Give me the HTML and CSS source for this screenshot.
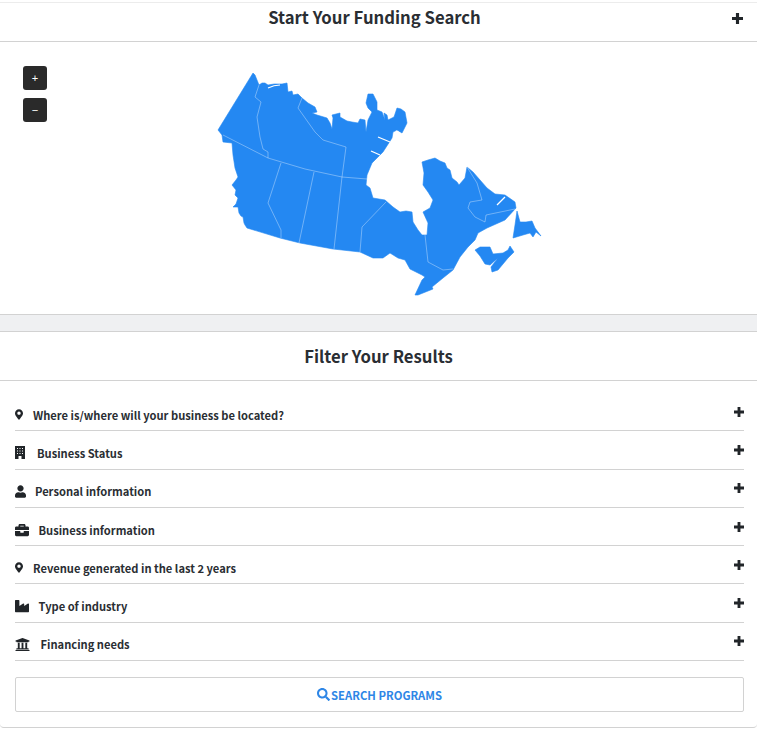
FILE: index.html
```html
<!DOCTYPE html>
<html lang="en">
<head>
<meta charset="utf-8">
<title>Funding Search</title>
<link rel="stylesheet" href="styles.css">
</head>
<body>
<svg class="defs" width="0" height="0" aria-hidden="true">
  <symbol id="i-plus" viewBox="0 0 448 448"><path d="M160 0h128v160h160v128H288v160H160V288H0V160h160z"/></symbol>
  <symbol id="i-marker" viewBox="0 0 384 512"><path d="M172.268 501.67C26.97 291.031 0 269.413 0 192 0 85.961 85.961 0 192 0s192 85.961 192 192c0 77.413-26.97 99.031-172.268 309.67-9.535 13.774-29.93 13.773-39.464 0zM192 272c44.183 0 80-35.817 80-80s-35.817-80-80-80-80 35.817-80 80 35.817 80 80 80z"/></symbol>
  <symbol id="i-building" viewBox="0 0 10 13"><path fill-rule="evenodd" d="M0 0h10v13H0zM2 2v1h1V2zm2.500 0v1h1V2zM7 2v1h1V2zM2 4.500v1h1v-1zm2.500 0v1h1v-1zM7 4.500v1h1v-1zM2 7v1h1V7zm2.500 0v1h1V7zM7 7v1h1V7zM3.500 10v3h3v-3z"/></symbol>
  <symbol id="i-user" viewBox="0 0 448 512"><path d="M224 256c70.700 0 128-57.300 128-128S294.700 0 224 0 96 57.300 96 128s57.300 128 128 128zm89.600 32h-16.700c-22.200 10.200-46.900 16-72.900 16s-50.600-5.800-72.900-16h-16.700C60.200 288 0 348.200 0 422.400V464c0 26.500 21.500 48 48 48h352c26.500 0 48-21.500 48-48v-41.600c0-74.200-60.200-134.400-134.400-134.400z"/></symbol>
  <symbol id="i-briefcase" viewBox="0 0 512 512"><path d="M320 336c0 8.840-7.160 16-16 16h-96c-8.840 0-16-7.160-16-16v-48H0v144c0 25.600 22.400 48 48 48h416c25.600 0 48-22.400 48-48V288H320v48zm144-208h-80V80c0-25.600-22.400-48-48-48H176c-25.600 0-48 22.400-48 48v48H48c-25.600 0-48 22.400-48 48v80h512v-80c0-25.600-22.400-48-48-48zm-144 0H192V96h128v32z"/></symbol>
  <symbol id="i-industry" viewBox="0 0 512 512"><path d="M475.115 163.781L336 252.309v-68.28c0-18.916-20.931-30.399-36.885-20.248L160 252.309V56c0-13.255-10.745-24-24-24H24C10.745 32 0 42.745 0 56v400c0 13.255 10.745 24 24 24h464c13.255 0 24-10.745 24-24V184.029c0-18.917-20.931-30.399-36.885-20.248z"/></symbol>
  <symbol id="i-bank" viewBox="0 0 512 512"><path d="M496 128v16a8 8 0 0 1-8 8h-24v12c0 6.627-5.373 12-12 12H60c-6.627 0-12-5.373-12-12v-12H24a8 8 0 0 1-8-8v-16a8 8 0 0 1 4.941-7.392l232-88a7.996 7.996 0 0 1 6.118 0l232 88A8 8 0 0 1 496 128zm-24 304H40c-13.255 0-24 10.745-24 24v16a8 8 0 0 0 8 8h464a8 8 0 0 0 8-8v-16c0-13.255-10.745-24-24-24zM96 192v192H60c-6.627 0-12 5.373-12 12v20h416v-20c0-6.627-5.373-12-12-12h-36V192h-64v192h-64V192h-64v192h-64V192H96z"/></symbol>
  <symbol id="i-search" viewBox="0 0 512 512"><path d="M505 442.700L405.300 343c-4.500-4.500-10.600-7-17-7H372c27.600-35.300 44-79.700 44-128C416 93.100 322.900 0 208 0S0 93.100 0 208s93.100 208 208 208c48.300 0 92.700-16.400 128-44v16.300c0 6.400 2.500 12.500 7 17l99.700 99.700c9.400 9.400 24.600 9.400 33.900 0l28.300-28.300c9.400-9.400 9.400-24.600.1-34zM208 336c-70.700 0-128-57.200-128-128 0-70.700 57.200-128 128-128 70.700 0 128 57.200 128 128 0 70.700-57.200 128-128 128z"/></symbol>
</svg>

<section class="card card-top">
  <header class="card-head head-top">
    <h2 class="card-title">Start Your Funding Search</h2>
    <svg class="head-plus"><use href="#i-plus"/></svg>
  </header>
  <div class="map-wrap">
    <div class="zoom-ctl">
      <button class="zoom-btn" type="button">+</button>
      <button class="zoom-btn" type="button">−</button>
    </div>
    <svg class="map" viewBox="0 42 757 272" width="757" height="272" role="img" aria-label="Map of Canada">
      <g class="land">
        <path d="M253 73 L255 75 259 85 262 83 265 83 268 85 274 84 282 84 287 83 288 92 292 91 293 95 298 94 302 98 308 103 315 107 317 112 312 113 317 115 327 118 330 123 332 129 333 118 332 115 340 113 340 117 347 121 352 122 358 123 360 119 365 120 366 132 368 120 372 112 368 108 366 103 368 94 373 94 377 102 377 110 382 112 385 120 384 113 387 115 388 120 394 117 397 108 401 109 405 112 407 123 402 133 397 130 393 132 392 138 383 152 378 157 372 163 367 175 366 185 370 188 373 198 385 200 393 207 400 212 406 211 412 212 413 222 418 230 422 235 427 235 428 223 423 212 430 208 433 200 428 192 423 185 424 173 422 162 428 160 435 158 440 161 445 163 447 168 450 170 452 178 457 182 459 185 465 178 467 167 473 172 480 180 487 188 495 194 505 195 515 202 516 208 505 220 487 228 478 233 475 240 468 247 460 257 453 270 443 278 432 287 433 289 418 295 415 295 422 280 425 277 422 275 410 269 405 260 398 258 390 253 383 258 373 258 360 252 333 249 300 243 280 238 247 228 245 225 244 223 243 217 241 216 239 213 238 207 233 207 236 204 238 198 235 195 236 190 232 185 236 180 238 177 235 168 233 155 232 143 223 142 222 135 218 130 Z"/>
        <path d="M513 238 L515 225 517 211 520 222 526 222 532 221 535 228 541 236 536 232 533 237 530 233 523 235 Z"/>
        <path d="M475 250 480 247 490 247 493 254 503 253 508 250 510 246 514 252 508 258 498 270 492 272 491 267 498 258 490 265 485 264 480 256 Z"/>
      </g>
      <g class="holes">
        <path d="M268 88 Q274 85 280 85"/>
        <path d="M378 137 L390 142"/>
        <path d="M371 151 L380 155"/>
        <path d="M396 131 L400 133"/>
        <path d="M497 205 L505 197"/>
      </g>
      <g class="borders">
        <path d="M223 135 L268 158 305 169 342 177 367 179"/>
        <path d="M259 85 L255 97 261 102 257 117 260 137 263 149 268 152 268 158"/>
        <path d="M302 98 L298 108 315 132 323 140 346 147 342 177"/>
        <path d="M281 163 L268 203 281 230 281 238"/>
        <path d="M314 172 L299 243"/>
        <path d="M342 177 L334 249"/>
        <path d="M386 202 L362 227 360 252"/>
        <path d="M425 235 L428 262 443 270 453 269"/>
        <path d="M467 167 L477 183 482 200 470 202 468 208 475 217 485 222 486 215 515 209"/>
      </g>
    </svg>
  </div>
</section>

<div class="gap"></div>

<section class="card card-filter">
  <header class="card-head head-filter">
    <h2 class="card-title">Filter Your Results</h2>
  </header>
  <div class="filter-body">
    <div class="row">
      <svg class="ico ico-marker"><use href="#i-marker"/></svg>
      <span class="row-label">Where is/where will your business be located?</span>
      <svg class="row-plus"><use href="#i-plus"/></svg>
    </div>
    <div class="row">
      <svg class="ico ico-building"><use href="#i-building"/></svg>
      <span class="row-label">Business Status</span>
      <svg class="row-plus"><use href="#i-plus"/></svg>
    </div>
    <div class="row">
      <svg class="ico ico-user"><use href="#i-user"/></svg>
      <span class="row-label">Personal information</span>
      <svg class="row-plus"><use href="#i-plus"/></svg>
    </div>
    <div class="row">
      <svg class="ico ico-wide"><use href="#i-briefcase"/></svg>
      <span class="row-label">Business information</span>
      <svg class="row-plus"><use href="#i-plus"/></svg>
    </div>
    <div class="row">
      <svg class="ico ico-marker"><use href="#i-marker"/></svg>
      <span class="row-label">Revenue generated in the last 2 years</span>
      <svg class="row-plus"><use href="#i-plus"/></svg>
    </div>
    <div class="row">
      <svg class="ico ico-wide"><use href="#i-industry"/></svg>
      <span class="row-label">Type of industry</span>
      <svg class="row-plus"><use href="#i-plus"/></svg>
    </div>
    <div class="row">
      <svg class="ico ico-bank"><use href="#i-bank"/></svg>
      <span class="row-label">Financing needs</span>
      <svg class="row-plus"><use href="#i-plus"/></svg>
    </div>
    <button class="search-btn" type="button">
      <svg class="search-ico"><use href="#i-search"/></svg>
      <span>SEARCH PROGRAMS</span>
    </button>
  </div>
</section>
</body>
</html>
```

FILE: styles.css
```css
* { box-sizing: border-box; }
html, body { margin: 0; padding: 0; background: #fff; }
body {
  font-family: "Noto Sans CJK SC", "Noto Sans", sans-serif;
  color: #212529;
  padding-top: 2px;
}
.defs { position: absolute; }
.card { background: #fff; }
.card-top { border-top: 1px solid #ececec; border-bottom: 1px solid #d2d2d2; }
.card-filter {
  border-top: 1px solid #d2d2d2;
  border-bottom: 1px solid #d2d2d2;
  border-radius: 0 0 4px 4px;
  height: 397px;
}
.card-head {
  display: flex;
  align-items: center;
  justify-content: center;
  position: relative;
  border-bottom: 1px solid #d2d2d2;
}
.head-top { height: 39px; padding: 0 8px 10px 0; }
.head-filter { height: 49px; }
.card-title { margin: 0; font-size: 16.700px; font-weight: 700; line-height: 28px; color: #2a2e33; }
.head-plus {
  position: absolute;
  right: 14px;
  top: 10px;
  width: 11px;
  height: 11px;
  fill: #212529;
}
.map-wrap { position: relative; height: 272px; }
.map { display: block; }
.land path { fill: #2488f2; stroke: #2488f2; stroke-width: .6; stroke-linejoin: round; }
.borders path { fill: none; stroke: #fff; stroke-opacity: .5; stroke-width: .7; }
.holes path { fill: none; stroke: #fff; stroke-width: 1.200; }
.zoom-ctl {
  position: absolute;
  left: 23px;
  top: 24px;
  display: flex;
  flex-direction: column;
  gap: 8px;
}
.zoom-btn {
  width: 24px;
  height: 24px;
  padding: 0;
  border: 0;
  border-radius: 3px;
  background: #2a2a2a;
  color: #fff;
  font: 400 11px/24px "Liberation Sans", sans-serif;
}
.gap { height: 16px; background: #eff0f2; }
.filter-body { padding: 12px 13px 0 15px; }
.row {
  display: flex;
  align-items: center;
  height: 38.300px;
  border-bottom: 1px solid #d2d2d2;
  padding-top: 6px;
}
.ico { flex: none; fill: #212529; }
.ico-marker { width: 8px; height: 11px; margin-right: 10px; }
.ico-building { width: 10px; height: 13px; margin-right: 12px; }
.ico-user { width: 11px; height: 13px; margin-right: 9px; }
.ico-wide { width: 14px; height: 14px; margin-right: 9.500px; }
.ico-bank { width: 15px; height: 15px; margin-right: 10.500px; }
.row-label { font-size: 11.150px; font-weight: 700; line-height: 18px; flex: 1; color: #2a2e33; }
.row-plus { flex: none; width: 10px; height: 10px; fill: #212529; position: relative; top: -3px; }
.search-btn {
  display: flex;
  align-items: center;
  justify-content: center;
  gap: 1px;
  width: 729px;
  height: 35px;
  margin-top: 16px;
  background: #fff;
  border: 1px solid #d2d2d2;
  border-radius: 2px;
  color: #2e86e6;
  font-family: inherit;
  font-size: 11.300px;
  font-weight: 700;
  padding: 0;
}
.search-ico { width: 13px; height: 13px; fill: #2e86e6; }
```
